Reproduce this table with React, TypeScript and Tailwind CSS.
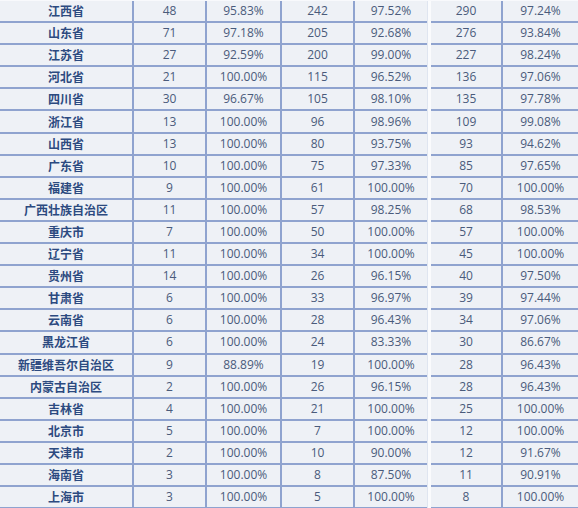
import React from "react";

const rows: [string, string, string, string, string, string, string][] = [
  ["江西省", "48", "95.83%", "242", "97.52%", "290", "97.24%"],
  ["山东省", "71", "97.18%", "205", "92.68%", "276", "93.84%"],
  ["江苏省", "27", "92.59%", "200", "99.00%", "227", "98.24%"],
  ["河北省", "21", "100.00%", "115", "96.52%", "136", "97.06%"],
  ["四川省", "30", "96.67%", "105", "98.10%", "135", "97.78%"],
  ["浙江省", "13", "100.00%", "96", "98.96%", "109", "99.08%"],
  ["山西省", "13", "100.00%", "80", "93.75%", "93", "94.62%"],
  ["广东省", "10", "100.00%", "75", "97.33%", "85", "97.65%"],
  ["福建省", "9", "100.00%", "61", "100.00%", "70", "100.00%"],
  ["广西壮族自治区", "11", "100.00%", "57", "98.25%", "68", "98.53%"],
  ["重庆市", "7", "100.00%", "50", "100.00%", "57", "100.00%"],
  ["辽宁省", "11", "100.00%", "34", "100.00%", "45", "100.00%"],
  ["贵州省", "14", "100.00%", "26", "96.15%", "40", "97.50%"],
  ["甘肃省", "6", "100.00%", "33", "96.97%", "39", "97.44%"],
  ["云南省", "6", "100.00%", "28", "96.43%", "34", "97.06%"],
  ["黑龙江省", "6", "100.00%", "24", "83.33%", "30", "86.67%"],
  ["新疆维吾尔自治区", "9", "88.89%", "19", "100.00%", "28", "96.43%"],
  ["内蒙古自治区", "2", "100.00%", "26", "96.15%", "28", "96.43%"],
  ["吉林省", "4", "100.00%", "21", "100.00%", "25", "100.00%"],
  ["北京市", "5", "100.00%", "7", "100.00%", "12", "100.00%"],
  ["天津市", "2", "100.00%", "10", "90.00%", "12", "91.67%"],
  ["海南省", "3", "100.00%", "8", "87.50%", "11", "90.91%"],
  ["上海市", "3", "100.00%", "5", "100.00%", "8", "100.00%"],
];

const num =
  "flex items-center justify-center h-full border-b-2 border-[#8fa3cf] bg-[#eef1f6] text-[12px] text-[#4a5b7b] [font-family:'Open_Sans','Noto_Sans_CJK_SC',sans-serif]";

export default function App() {
  return (
    <div className="w-[578px] h-[508px] overflow-hidden bg-[#f8f9fc] pt-px">
      {rows.map((r, i) => (
        <div
          key={i}
          className="grid grid-cols-[134px_73px_75px_73px_72px_4px_72px_75px] h-[22.1px]"
        >
          <div className="flex items-center justify-center h-full border-b-2 border-r-2 border-[#8fa3cf] bg-[#eef1f6] text-[12px] font-bold text-[#2c4a80] [font-family:'Noto_Sans_CJK_SC',sans-serif]">
            {r[0]}
          </div>
          <div className={num + " border-r-2"}>{r[1]}</div>
          <div className={num + " border-r-2"}>{r[2]}</div>
          <div className={num + " border-r-2"}>{r[3]}</div>
          <div className={num}>{r[4]}</div>
          <div className="h-full bg-[#fafbfd] border-l border-[#dfe5f0]" />
          <div className={num + " border-r-2"}>{r[5]}</div>
          <div className={num}>{r[6]}</div>
        </div>
      ))}
    </div>
  );
}
